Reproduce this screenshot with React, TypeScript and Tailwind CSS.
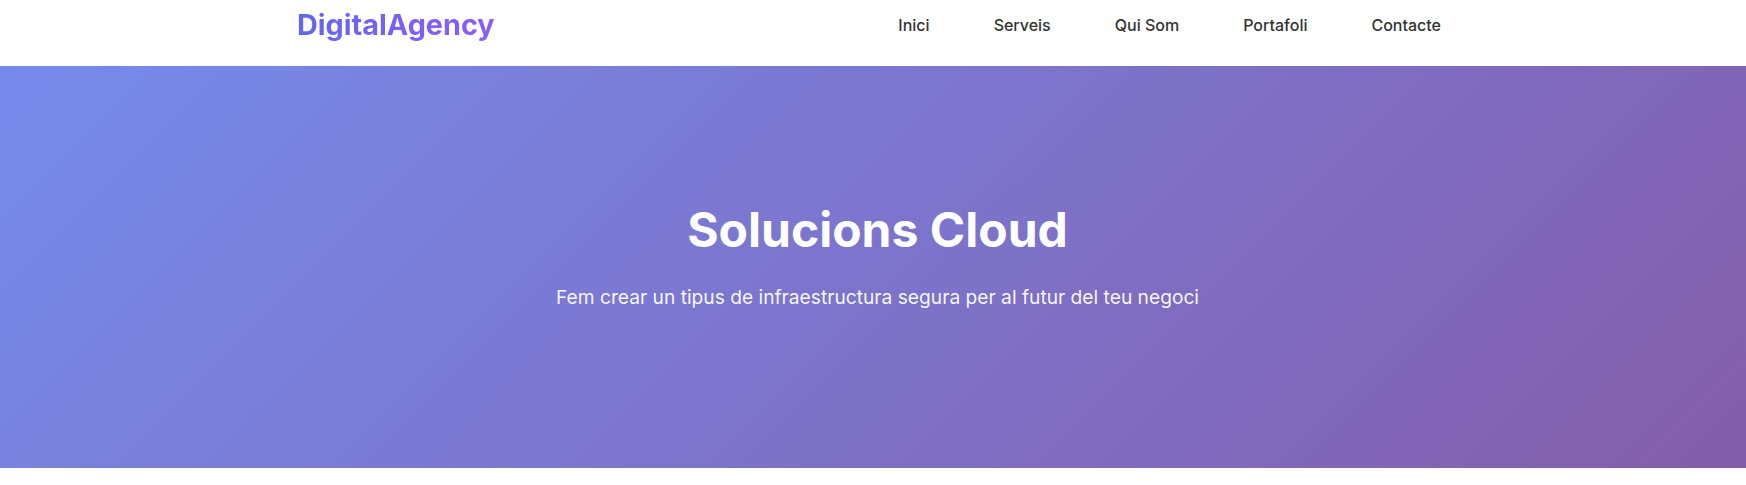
import React from 'react';

const links = ['Inici', 'Serveis', 'Qui Som', 'Portafoli', 'Contacte'];

export default function App() {
  return (
    <div className="min-h-screen bg-white" style={{ fontFamily: 'Inter, "Noto Sans", sans-serif' }}>
      <header className="bg-white h-[66px]">
        <div className="mx-auto max-w-[1200px] px-6 h-[50px] flex items-center justify-between">
          <div className="text-[28.8px] font-bold leading-[1.25] bg-gradient-to-r from-[#6366f1] to-[#8b5cf6] bg-clip-text text-transparent">
            DigitalAgency
          </div>
          <nav className="flex items-center gap-[48px]">
            {links.map((l) => (
              <a key={l} href="#" className="px-2 text-[16px] font-medium text-[#333333]">
                {l}
              </a>
            ))}
          </nav>
        </div>
      </header>

      <section className="h-[402px] bg-[linear-gradient(135deg,#758bec_0%,#845dab_100%)] flex flex-col items-center pt-[135px] pl-[9px] text-white text-center">
        <h1 className="text-[48px] font-bold leading-[1.2]">Solucions Cloud</h1>
        <p className="mt-[24px] text-[19.2px] leading-[1.5] text-white/95">
          Fem crear un tipus de infraestructura segura per al futur del teu negoci
        </p>
      </section>
    </div>
  );
}
